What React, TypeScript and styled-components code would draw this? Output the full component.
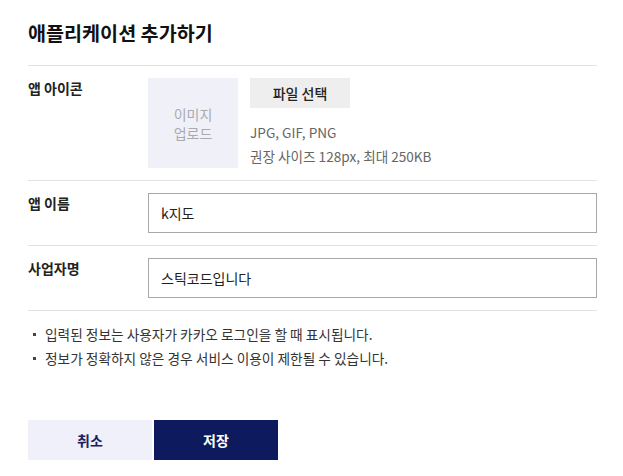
import styled, { createGlobalStyle } from 'styled-components';

const GlobalStyle = createGlobalStyle`
  body {
    margin: 0;
    background: #fff;
    font-family: "Noto Sans CJK KR", "Noto Sans", sans-serif;
    color: #222;
  }
`;

export default function App() {
  return (
    <>
      <GlobalStyle />
      <Page>
        <Title>애플리케이션 추가하기</Title>

        <Row>
          <Label>앱 아이콘</Label>
          <IconField>
            <ImageBox>
              이미지
              <br />
              업로드
            </ImageBox>
            <div>
              <FileButton type="button">파일 선택</FileButton>
              <Hint>
                <p>JPG, GIF, PNG</p>
                <p>권장 사이즈 128px, 최대 250KB</p>
              </Hint>
            </div>
          </IconField>
        </Row>

        <Row>
          <Label>앱 이름</Label>
          <Input defaultValue="k지도" />
        </Row>

        <Row>
          <Label>사업자명</Label>
          <Input defaultValue="스틱코드입니다" />
        </Row>

        <Notice>
          <li>입력된 정보는 사용자가 카카오 로그인을 할 때 표시됩니다.</li>
          <li>정보가 정확하지 않은 경우 서비스 이용이 제한될 수 있습니다.</li>
        </Notice>

        <Actions>
          <ActionButton type="button">취소</ActionButton>
          <ActionButton type="button" primary>
            저장
          </ActionButton>
        </Actions>
      </Page>
    </>
  );
}

const Page = styled.div`
  width: 569px;
  padding: 20px 0 0 28px;
`;

const Title = styled.h1`
  margin: 0;
  font-size: 19.6px;
  font-weight: 700;
  line-height: 26px;
  color: #111;
  padding-bottom: 19px;
  border-bottom: 1px solid #e2e2e2;
`;

const Row = styled.div`
  display: flex;
  align-items: flex-start;
  padding: 12px 0 12px;
  border-bottom: 1px solid #e2e2e2;
`;

const Label = styled.div`
  width: 120px;
  flex-shrink: 0;
  font-size: 14px;
  font-weight: 700;
  line-height: 20px;
  color: #222;
`;

const IconField = styled.div`
  display: flex;
  gap: 12px;
`;

const ImageBox = styled.div`
  width: 90px;
  height: 90px;
  padding-top: 2px;
  box-sizing: border-box;
  background: #f0f1f8;
  color: #a9a9b0;
  font-size: 14px;
  line-height: 19px;
  display: flex;
  align-items: center;
  justify-content: center;
  text-align: center;
`;

const FileButton = styled.button`
  width: 100px;
  height: 30px;
  border: none;
  background: #eeeeee;
  font-family: inherit;
  font-size: 14px;
  font-weight: 500;
  color: #222;
  cursor: pointer;
`;

const Hint = styled.div`
  margin-top: 12px;
  font-size: 13.6px;
  line-height: 24px;
  color: #666;

  p {
    margin: 0;
  }
`;

const Input = styled.input`
  flex: 1;
  height: 40px;
  box-sizing: border-box;
  border: 1px solid #a8a8a8;
  padding: 0 12px;
  font-family: inherit;
  font-size: 14px;
  color: #222;
  outline: none;
`;

const Notice = styled.ul`
  list-style: none;
  margin: 0;
  padding: 11px 0 0;

  li {
    position: relative;
    padding-left: 17px;
    font-size: 13.7px;
    line-height: 24px;
    color: #333;
  }

  li::before {
    content: '';
    position: absolute;
    left: 5px;
    top: 11px;
    width: 3px;
    height: 3px;
    background: #444;
  }
`;

const Actions = styled.div`
  display: flex;
  gap: 2px;
  margin-top: 50px;
`;

const ActionButton = styled.button<{ primary?: boolean }>`
  width: 124px;
  height: 40px;
  border: none;
  font-family: inherit;
  font-size: 14px;
  font-weight: 700;
  background: ${(p) => (p.primary ? '#0e1a5e' : '#eff0f9')};
  color: ${(p) => (p.primary ? '#fff' : '#1a2160')};
  cursor: pointer;
`;
